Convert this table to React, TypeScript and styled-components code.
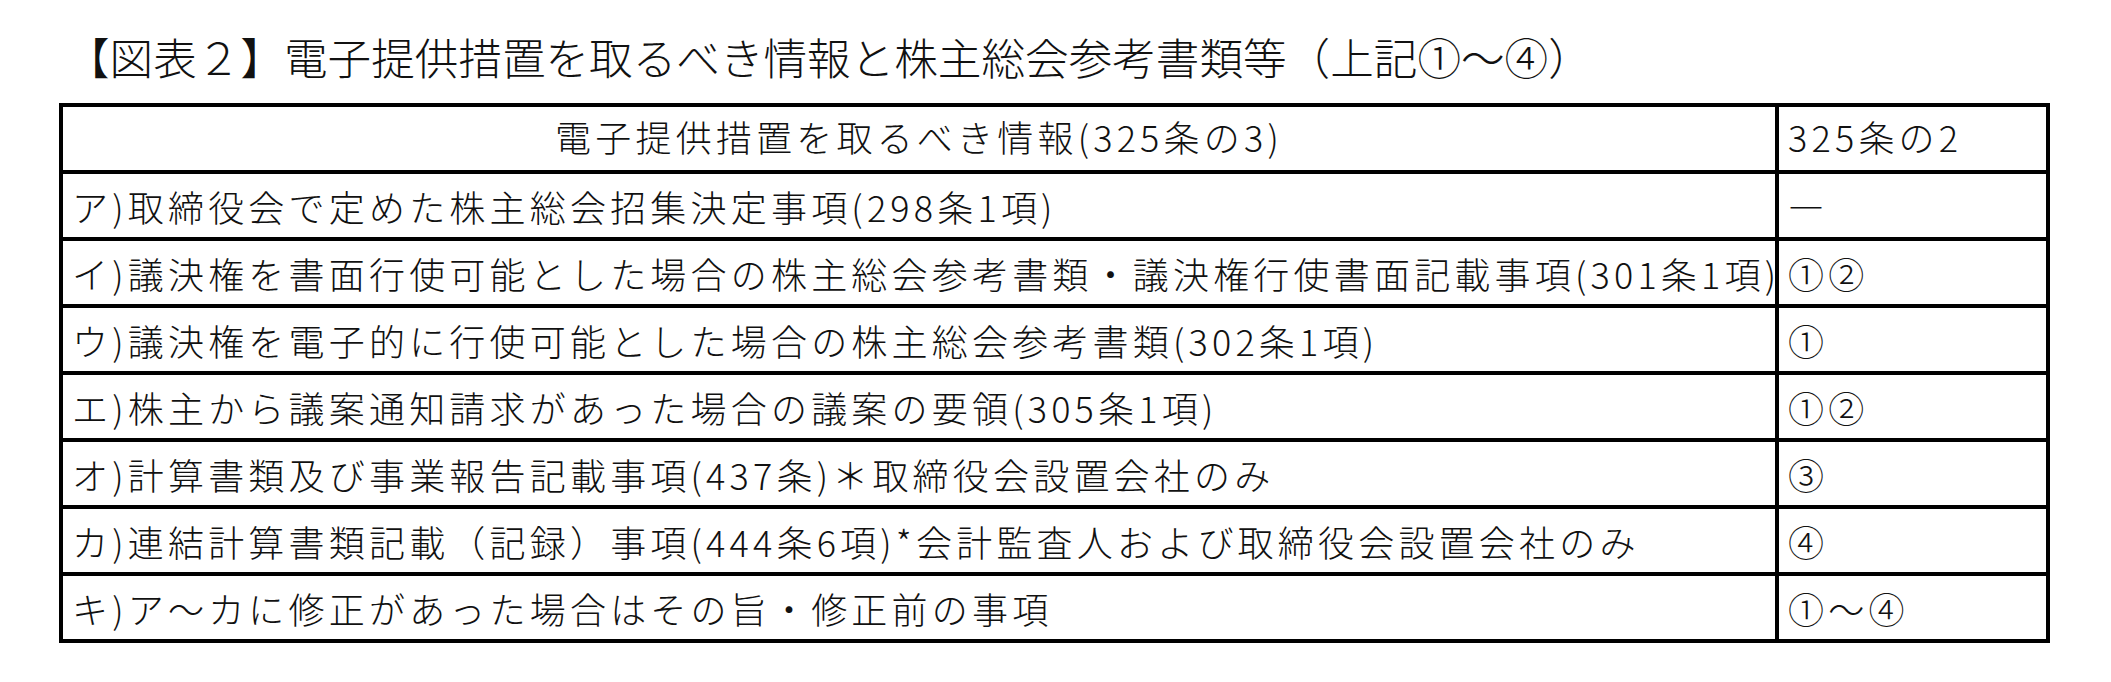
import styled, { createGlobalStyle } from "styled-components";

const GlobalStyle = createGlobalStyle`
  html, body {
    margin: 0;
    padding: 0;
    background: #fff;
  }
  body {
    font-family: "Noto Sans CJK JP", "Noto Sans", sans-serif;
    color: #111;
  }
`;

const Page = styled.div`
  padding: 39px 0 0 59px;
`;

const Title = styled.h2`
  margin: 0 0 21px 7px;
  font-family: "Liberation Serif", "Noto Sans CJK JP", serif;
  font-size: 43.6px;
  line-height: 43px;
  font-weight: 300;
  white-space: nowrap;
`;

const Table = styled.div`
  display: grid;
  grid-template-columns: 1712px 267px;
  gap: 4px;
  padding: 4px;
  width: fit-content;
  background: #000;
`;

const Cell = styled.div<{ $center?: boolean; $head?: boolean }>`
  display: flex;
  align-items: center;
  justify-content: ${p => (p.$center ? "center" : "flex-start")};
  height: 63px;
  box-sizing: border-box;
  padding: 0 9px ${p => (p.$head ? "6px" : "0")};
  background: #fff;
  font-family: "Liberation Sans Narrow", "Noto Sans CJK JP", sans-serif;
  font-size: 36px;
  font-weight: 300;
  letter-spacing: 4.2px;
  white-space: nowrap;
`;

const rows: [string, string][] = [
  ["ア)取締役会で定めた株主総会招集決定事項(298条1項)", "―"],
  ["イ)議決権を書面行使可能とした場合の株主総会参考書類・議決権行使書面記載事項(301条1項)", "①②"],
  ["ウ)議決権を電子的に行使可能とした場合の株主総会参考書類(302条1項)", "①"],
  ["エ)株主から議案通知請求があった場合の議案の要領(305条1項)", "①②"],
  ["オ)計算書類及び事業報告記載事項(437条)＊取締役会設置会社のみ", "③"],
  ["カ)連結計算書類記載（記録）事項(444条6項)*会計監査人および取締役会設置会社のみ", "④"],
  ["キ)ア～カに修正があった場合はその旨・修正前の事項", "①～④"],
];

export default function App() {
  return (
    <>
      <GlobalStyle />
      <Page>
        <Title>【図表２】電子提供措置を取るべき情報と株主総会参考書類等（上記①～④）</Title>
        <Table>
          <Cell $center $head>電子提供措置を取るべき情報(325条の3)</Cell>
          <Cell $head>325条の2</Cell>
          {rows.map(([info, ref]) => (
            <>
              <Cell key={info}>{info}</Cell>
              <Cell key={info + "-ref"}>{ref}</Cell>
            </>
          ))}
        </Table>
      </Page>
    </>
  );
}
